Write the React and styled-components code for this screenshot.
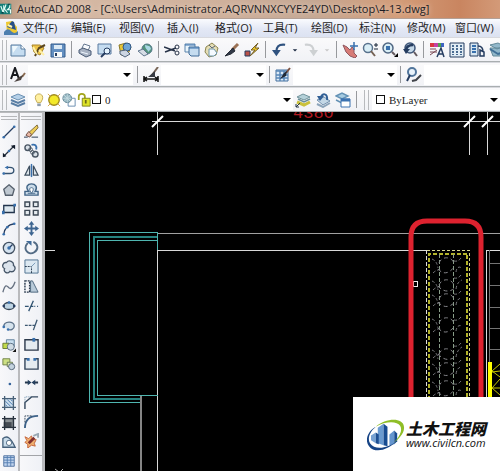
import React from 'react';
import styled, { createGlobalStyle } from 'styled-components';

const GlobalStyle = createGlobalStyle`
	* {
		box-sizing: border-box;
	}
	body {
		margin: 0;
		background: #000;
		font-family: "Open Sans", "Noto Sans CJK SC", sans-serif;
		font-size: 12px;
		color: #1c1c24;
	}
	button, select {
		font: inherit;
		color: inherit;
	}
`;

const Window = styled.div`
	display: flex;
	flex-direction: column;
	height: 100vh;
	overflow: hidden;
`;
const TitleBar = styled.header`
	display: flex;
	align-items: center;
	gap: 5px;
	height: 19px;
	flex: none;
	background: linear-gradient(90deg, #b99a82, #d5b9a4 12%, #cfb09b 45%, #c5a894 62%, #d39c78 80%, #c98560 92%, #d39a78);
	border-bottom: 1px solid #b3a096;
	overflow: hidden;
`;
const Title = styled.h1`
	margin: 0;
	font-size: 11px;
	line-height: 18px;
	font-weight: 400;
	white-space: nowrap;
	text-shadow: 0 0 5px #f0ddd0;
`;
const MenuBar = styled.nav`
	display: flex;
	align-items: center;
	height: 18px;
	flex: none;
	padding-left: 3px;
	background: linear-gradient(#fafbfe, #e3e8f5 55%, #dce2f1);
	overflow: hidden;
`;
const MenuItem = styled.button`
	flex: none;
	width: 48px;
	padding: 0 0 0 4px;
	border: 0;
	background: none;
	font-size: 11px;
	line-height: 18px;
	text-align: left;
	white-space: nowrap;
`;
const Toolbar = styled.div`
	display: flex;
	align-items: center;
	height: 25px;
	flex: none;
	background: linear-gradient(#fafafb, #f1f2f6);
	border-top: 1px solid #d8d9de;
	border-bottom: 1px solid #a9aeb0;
	overflow: hidden;
`;
const Grip = styled.span`
	flex: none;
	width: 5px;
	height: 20px;
	margin-left: ${(p) => (p.$inner ? 4 : 2)}px;
	margin-right: ${(p) => (p.$inner ? 3 : 1)}px;
	border: solid #b8babd;
	border-width: 0 1px;
`;
const Separator = styled.span`
	flex: none;
	width: 1px;
	height: 17px;
	margin: 0 3px;
	background: #97999d;
`;
const ToolButton = styled.button`
	display: flex;
	align-items: center;
	justify-content: center;
	flex: none;
	width: ${(p) => p.$width || 20}px;
	height: 20px;
	padding: 0;
	border: 0;
	background: none;
	overflow: hidden;
`;
const Combo = styled.label`
	display: flex;
	align-items: center;
	gap: 1px;
	position: relative;
	flex: ${(p) => (p.$width ? 'none' : '1 0 auto')};
	width: ${(p) => (p.$width ? p.$width + 'px' : 'auto')};
	min-width: ${(p) => p.$min || 0}px;
	height: 20px;
	margin-right: ${(p) => p.$gap || 0}px;
	padding-left: 4px;
	background: #fff;
`;
const Select = styled.select`
	flex: 1;
	min-width: 0;
	height: 20px;
	padding: 0 12px 0 3px;
	border: 0;
	background: none;
	appearance: none;
	font-family: "Liberation Serif", serif;
	font-size: 11px;
`;
const Caret = styled.span`
	position: absolute;
	right: 2px;
	top: 8px;
	border: 4px solid transparent;
	border-top: 4px solid #000;
	border-bottom: 0;
	pointer-events: none;
`;
const Swatch = styled.span`
	flex: none;
	width: 9px;
	height: 9px;
	border: 1px solid #111;
	background: #fff;
`;
const Body = styled.main`
	display: flex;
	flex: 1;
	min-height: 0;
`;
const Palette = styled.aside`
	display: flex;
	flex-direction: column;
	flex: none;
	width: ${(p) => p.$width}px;
	padding-top: 3px;
	background: linear-gradient(90deg, #f8f8fa, #eff1f6);
	border-right: ${(p) => p.$edge}px solid #b9babd;
	border-top: 1px solid #b9babd;
`;
const PaletteGrip = styled.span`
	flex: none;
	height: 4px;
	margin: 0 1px 2px;
	border: solid #b5b7ba;
	border-width: 1px 0;
`;
const PaletteButton = styled.button`
	display: flex;
	align-items: center;
	justify-content: center;
	flex: 1;
	min-height: 0;
	padding: 0;
	border: 0;
	background: none;
`;
const PaletteEnd = styled.div`
	flex: 1;
	margin-top: 4px;
	margin-bottom: -4px;
	border-top: 1px solid #a2a4a8;
`;
const Canvas = styled.section`
	position: relative;
	flex: 1;
	min-width: 0;
	background: #000;
	overflow: hidden;
`;
const Drawing = styled.svg`
	display: block;
	width: 100%;
	height: 100%;
`;
const Brand = styled.a`
	position: absolute;
	right: 0;
	bottom: 0;
	display: flex;
	align-items: center;
	height: 74px;
	padding: 0 14px;
	background: #fff;
	color: #111;
	text-decoration: none;
`;
const BrandText = styled.span`
	display: flex;
	flex-direction: column;
`;
const BrandName = styled.strong`
	font-family: "Noto Sans CJK SC", sans-serif;
	font-size: 16px;
	font-weight: 900;
	font-style: italic;
	line-height: 18px;
`;
const BrandUrl = styled.span`
	font-family: "Open Sans", sans-serif;
	font-size: 11px;
	font-weight: 500;
	font-style: italic;
	line-height: 12px;
`;

const NAVY = '#253c60';
const BLUE = '#3970ad';
const SKY = '#c5dcf0';

// every glyph is drawn on a 16 x 16 grid
const glyphs = {
	app: <><path d="M0 1h15v14H0z" fill="#157e78" /><path d="M1 4l3 8M5 3v10M8 2l-2 6 4 5M13 2v4l-3 3h4v5" stroke="#e6fff8" strokeWidth="1.5" /><path d="M2 13h3M11 2h2" stroke="#073f43" strokeWidth="2" /></>,
	dwg: <><path d="M3 2l6-1 5 6v6H4z" fill="#edc832" /><path d="M4 7l5-6 2 1 2 8-3-1z" fill="#274f88" /><path d="M1 12c3-4 5-3 7-1s4 3 7 0v4H1z" fill="#4c7eaf" /><path d="M5 5l4 2" stroke="#fff4b0" strokeWidth="2" /></>,
	file: <><path d="M1 3h10l4 4v7H1z" fill={SKY} stroke="#577b9e" /><path d="M11 3v4h4" fill="#fff" stroke="#577b9e" /><path d="M2 4h6L3 11z" fill="#eff8fc" /></>,
	open: <><path d="M2 3h8l4 3-4 7-6-3z" fill="#edc347" stroke="#a8842c" /><path d="M5 14l4-8 6-3" stroke="#59451f" strokeWidth="2" /><path d="M9 8l5 5M3 5l4 7" stroke="#fff0a5" strokeWidth="2" /></>,
	save: <><path d="M1 2h14v13H1z" fill="#638fc1" stroke="#345c8d" /><path d="M4 3h8v4H4z" fill="#dceaf5" /><path d="M4 10h8v5H4z" fill="#f5f8fa" /><path d="M6 11v3" stroke={NAVY} strokeWidth="2" /></>,
	print: <><path d="M5 6l2-4 6 2-2 5z" fill="#fff" stroke="#63758e" /><path d="M2 8l4-2 8 3v4l-5 2-7-4z" fill="#a7b1c1" stroke="#495b76" /><path d="M4 10l7 2M7 4l4 1" stroke="#eef6ff" /></>,
	preview: <><path d="M1 2h13v10H1z" fill={SKY} stroke="#5b7ba0" /><circle cx="10" cy="9" r="3" fill="#e5f4ff" stroke={NAVY} /><path d="M8 11l-4 4" stroke={NAVY} strokeWidth="2" /></>,
	publish: <><path d="M2 3l7-2 5 4-3 7-7 1z" fill="#e8c638" stroke="#8a792b" /><circle cx="10" cy="5" r="4" fill="#6ea5d6" stroke="#315782" /><path d="M3 9l6-1 4 4-5 3-5-3z" fill="#ccd5e2" stroke="#50627b" /></>,
	globe: <><circle cx="10" cy="7" r="5" fill="#52937b" stroke="#55798a" /><path d="M8 3c3 1 5 0 6 4l-3 3c0-3-3-2-3-7" fill="#a9d7e4" /><path d="M1 9l5-2 5 5-4 2z" fill="#d5dce5" stroke="#60768e" /></>,
	cut: <><path d="M0 5l11 4M1 10l11-4" stroke="#273348" strokeWidth="1.5" /><circle cx="13" cy="5" r="2" stroke="#273348" /><circle cx="13" cy="11" r="2" stroke="#273348" /></>,
	copy: <><path d="M1 2h10v8H1z" fill="#eaf5fb" stroke="#5b84ac" /><path d="M5 5h10v9H7l-2-2z" fill={SKY} stroke="#3e6b98" /><path d="M1 3h10M5 6h10" stroke={BLUE} /></>,
	paste: <><path d="M2 5l6-4 6 5-2 7-7 2-4-5z" fill="#e4ddb5" stroke="#8d8650" /><path d="M5 7h5l3 4-3 3H5z" fill="#f5faff" stroke="#6e96aa" /><path d="M5 3l3 3 3-2" stroke="#586477" /></>,
	brush: <><path d="M14 2L8 8" stroke="#9b7255" strokeWidth="3" /><path d="M9 6l2 3-4 3-6 2 4-4z" fill="#303848" stroke="#272d37" /></>,
	block: <><path d="M1 9h5v5H1z" fill="#b95149" stroke={NAVY} /><path d="M14 1l-7 7h4l-5 6 9-8h-4z" fill="#f4ce26" stroke="#745f29" /></>,
	undo: <><path d="M15 2C7 1 5 5 5 10" stroke="#2f527f" strokeWidth="2.5" /><path d="M0 8h10l-5 7z" fill="#2f527f" /></>,
	redo: <><path d="M1 2c8-1 10 3 10 8" stroke="#cdd0d2" strokeWidth="2.5" /><path d="M6 8h10l-5 7z" fill="#cdd0d2" /></>,
	down: <path d="M5 7h6l-3 3z" fill="#1b2940" />,
	downPale: <path d="M5 7h6l-3 3z" fill="#c8c8c8" />,
	pan: <><path d="M1 3l4 2 3 3 2-3 2 2v4l3 3-2 2-5-2-4-4z" fill="#d77b76" stroke="#8e5860" /><path d="M12 0v8M8 4h8" stroke={BLUE} strokeWidth="1.5" /></>,
	zoom: <><circle cx="6" cy="6" r="4.500" fill="#d9eef6" stroke="#58718c" strokeWidth="1.5" /><path d="M9 9l4 5" stroke="#756255" strokeWidth="2" /><path d="M14 1v4M12 3h4M12 7h4" stroke="#172536" /></>,
	zoomWin: <><circle cx="6" cy="6" r="5" fill="#d9eef6" stroke="#506783" strokeWidth="1.5" /><path d="M4 4h4v4H4z" fill={BLUE} /><path d="M10 10l3 3" stroke="#655b61" strokeWidth="2" /><path d="M12 15h4v-4z" fill="#000" /></>,
	zoomBack: <><circle cx="8" cy="6" r="5" fill="#c4d8e8" stroke="#405779" strokeWidth="1.5" /><path d="M12 10l3 4" stroke="#655b61" strokeWidth="2" /><path d="M4 9C4 5 7 3 11 3" stroke={NAVY} strokeWidth="2.5" /><path d="M1 7h7l-4 5z" fill={NAVY} /></>,
	props: <><path d="M1 1h4v4H1z" fill="#d83940" /><path d="M5 1h4v4H5z" fill="#c541a6" /><path d="M9 1h3v4H9z" fill="#50a34e" /><path d="M12 1h3v4h-3z" fill="#3e64c3" /><path d="M1 7h6M1 10h7M1 13l7-5" stroke="#784653" /><path d="M8 15l4-9 3 9M9 12h5" stroke={NAVY} strokeWidth="1.5" /></>,
	center: <><path d="M1 1h14v14H1z" fill="#e2edf5" stroke={NAVY} /><path d="M4 3v10M8 3v10M12 3v10" stroke="#496b91" strokeWidth="2" strokeDasharray="2 1" /></>,
	tools: <><path d="M1 1h8v13H1z" fill="#d8e7f2" stroke={NAVY} /><path d="M3 4h4M3 7h4M3 10h4" stroke={BLUE} strokeWidth="2" /><path d="M9 4c4 0 5 2 5 6M11 8v6h4v-4z" stroke={NAVY} strokeWidth="1.5" /></>,
	sheet: <><path d="M1 3l8-2 6 3-7 3zM1 6h12l2 8H4z" fill="#91b7ca" stroke="#638999" /><path d="M1 7l8 5 6-2" stroke="#406f96" strokeWidth="2" /></>,
	text: <><path d="M1 12L5 1l4 11M2 8h6" stroke="#17191e" strokeWidth="2" /><path d="M15 6l-3 4" stroke="#8a6a50" strokeWidth="2" /><path d="M13 8l-2 5-7 2 5-5z" fill="#4b4340" /></>,
	dim: <><path d="M1 9v6M15 9v6M1 12h14M4 10l-3 2 3 2M12 10l3 2-3 2" stroke="#111" strokeWidth="1.5" /><path d="M15 0L9 8" stroke="#796658" strokeWidth="2" /><path d="M12 4v6H5z" fill="#363a42" /></>,
	table: <><path d="M1 3h12v11H1z" fill="#dceaf7" stroke="#436e9e" /><path d="M1 4h12M1 8h12M1 11h12M5 4v10M9 4v10" stroke="#5886b8" strokeWidth="1.5" /><path d="M15 1l-4 5" stroke="#7d513f" strokeWidth="2" /><path d="M12 4l-1 5-6 3 4-6z" fill="#202936" /></>,
	leader: <><circle cx="6" cy="5" r="4" fill="#e9f3fb" stroke="#52769c" strokeWidth="2" /><path d="M4 8l-3 6" stroke={NAVY} strokeWidth="2" /><path d="M15 8l-5 5-4 1" stroke="#41454b" strokeWidth="2" /></>,
	layers: <><path d="M1 5l7-3 7 3-7 3z" fill="#b5d0e8" stroke="#6b91b3" /><path d="M1 8l7 3 7-3M1 11l7 3 7-3" stroke="#587da4" strokeWidth="2" /></>,
	bulb: <><path d="M6 11L4 7c-2-8 10-8 8 0l-2 4z" fill="#fff0a0" stroke="#bea349" /><path d="M6 12h4v3H6z" fill="#8e9dac" /></>,
	sun: <><circle cx="8" cy="8" r="6" fill="#f3e929" stroke="#9f891d" strokeWidth="1.5" /><path d="M1 1l3 3M12 4l3-3M1 15l3-3M12 12l3 3" stroke="#d3a437" /></>,
	freeze: <><path d="M8 6h7v9H7v-4" fill="#fff" stroke="#5e84aa" /><circle cx="6" cy="6" r="5" fill="#93b4bf" stroke="#587d8d" /><path d="M6 1v10M1 6h10M2 2l8 8M2 10l8-8" stroke="#c3dae0" /></>,
	lock: <><path d="M2 8V4c0-4 7-4 7 0v3" stroke="#a3a51c" strokeWidth="2" /><path d="M6 6h9v9H6z" fill="#dee327" stroke="#777b1a" /><path d="M10 8v4" stroke="#6d6b19" strokeWidth="2" /></>,
	layerSet: <><path d="M2 5l6-3 7 3-6 3z" fill="#b4d0d8" stroke="#72949c" /><path d="M2 10l7 3 6-3" stroke="#c9c03c" strokeWidth="3" /><path d="M3 7l6 3 6-3" stroke="#6c8f99" strokeWidth="1.5" /><path d="M1 15l4-4M1 12v3h3" stroke="#223344" /></>,
	layerBack: <><path d="M2 8l7-3 6 4-7 4z" fill="#c3d7e6" stroke="#7290ae" /><path d="M2 12l6 3 7-4" stroke="#8ca4ba" strokeWidth="2" /><path d="M12 8C13 1 7 1 6 5" stroke="#315f95" strokeWidth="2" /><path d="M2 4h7l-4 5z" fill="#315f95" /></>,
	layerState: <><path d="M1 4l6-3 6 3-6 3zM1 8l6 3" fill="#a6cbe1" stroke="#6492b5" strokeWidth="1.5" /><path d="M6 7h9v8H6z" fill="#fff" stroke="#3b72b1" /><path d="M6 8h9" stroke="#3b72b1" strokeWidth="3" /></>,
	line: <><path d="M2 14L14 2" stroke={NAVY} strokeWidth="1.5" /><circle cx="2" cy="14" r="1.5" fill={BLUE} /><circle cx="14" cy="2" r="1.5" fill={BLUE} /></>,
	ray: <><path d="M2 14L14 2" stroke="#26303e" strokeWidth="1.5" /><path d="M1 15v-5l4 4zM15 1v5l-5-4z" fill="#111b2a" /><circle cx="8" cy="8" r="1.5" fill={BLUE} /></>,
	pline: <><path d="M1 12h8c6 0 6-7 0-7H5" stroke="#345270" strokeWidth="1.5" /><path d="M3 5l4-2v4z" fill={BLUE} /><circle cx="2" cy="12" r="1.5" fill={BLUE} /></>,
	polygon: <path d="M8 2l6 5-2 7H4L2 7z" fill="#bfc8d1" stroke="#56606d" strokeWidth="1.5" />,
	rect: <><path d="M2 4h12v8H2z" fill="#dce7ef" stroke="#22344c" strokeWidth="1.5" /><path d="M0 10h3v4H0zM13 2h3v3h-3z" fill={BLUE} /></>,
	arc: <><path d="M2 14C3 7 7 3 14 2" stroke={NAVY} strokeWidth="1.5" /><circle cx="2" cy="14" r="1.5" fill={BLUE} /><circle cx="6" cy="6" r="1.5" fill={BLUE} /><circle cx="14" cy="2" r="1.5" fill={BLUE} /></>,
	circle: <><circle cx="8" cy="8" r="6.5" fill="#d4e2ef" stroke="#435264" strokeWidth="1.5" /><path d="M8 8l4-4" stroke={NAVY} strokeWidth="1.5" /><circle cx="8" cy="8" r="2" fill={BLUE} /></>,
	cloud: <path d="M5 3c3-4 9-1 8 3 4 3 1 9-4 7-3 4-8 0-6-3-4-2-2-8 2-7z" fill="#dce4ed" stroke="#465668" strokeWidth="1.5" />,
	spline: <path d="M1 14C4 3 6 7 8 9s5-1 7-7" stroke="#667181" strokeWidth="1.5" />,
	ellipse: <><ellipse cx="8" cy="8" rx="6" ry="4" fill="#bed4e4" stroke="#344353" strokeWidth="1.5" /><circle cx="2" cy="8" r="1.5" fill={NAVY} /><circle cx="14" cy="8" r="1.5" fill={NAVY} /><circle cx="8" cy="4" r="1.5" fill={BLUE} /></>,
	ellipseArc: <><path d="M2 9c0-7 12-7 12-1 0 4-4 5-7 4" fill="#d6e3ed" stroke="#5d7289" strokeWidth="1.5" /><circle cx="2" cy="9" r="1.5" fill={BLUE} /><circle cx="7" cy="12" r="1.5" fill={BLUE} /></>,
	insert: <><path d="M5 2h9v8H5z" fill="#c9dff0" stroke="#557793" /><path d="M1 6h7v6H1z" fill="#c1da4a" stroke="#60732b" /><circle cx="10" cy="10" r="4" fill="#cfdbe4" stroke="#52667a" /><path d="M12 16h4v-4z" fill="#111" /></>,
	makeBlock: <><path d="M1 2h8v7H1z" fill="#cde084" stroke="#687a3f" /><path d="M6 6h6v5H6z" fill="#dbe9ac" stroke="#657850" /><circle cx="11" cy="11" r="3.5" fill="#c4d3df" stroke="#4b5d70" /></>,
	point: <circle cx="9" cy="8" r="1.5" fill="#35639b" />,
	hatch: <><path d="M2 2h12v12H2z" fill="#d1e1ee" /><path d="M0 3h16M0 13h16M3 0v16M13 0v16" stroke="#496178" strokeWidth="1.5" /><path d="M4 6l6 6M6 4l6 6M4 10l2 2M10 4l2 2" stroke={BLUE} /></>,
	gradient: <><path d="M2 2h12v12H2z" fill="#8b9194" /><path d="M2 7h9v6H2z" fill="#454b52" /><path d="M0 3h16M0 13h16M3 0v16M13 0v16" stroke="#29323d" strokeWidth="1.5" /></>,
	region: <><path d="M1 14V4c5-4 9-1 14 10z" fill="#c9dcea" stroke="#46617b" strokeWidth="1.5" /><circle cx="8" cy="9" r="3" fill="#fff" stroke="#46617b" /></>,
	grid: <><path d="M2 2h12v12H2z" fill="#c0d4ee" stroke="#4a6d9b" /><path d="M2 4h12M2 7h12M2 10h12M6 2v12M10 2v12" stroke="#527db0" /></>,
	erase: <><path d="M14 1l1 3-8 9-4-2z" fill="#eccb57" stroke="#7d6a39" /><path d="M5 8l3 3-2 3-4-2z" fill="#e9b8a5" stroke="#71514b" /><path d="M0 14h4M8 14h7" stroke="#22344c" /></>,
	copyObj: <><circle cx="4" cy="5" r="3" fill="#dae1e8" stroke="#4a5664" strokeWidth="1.5" /><circle cx="7" cy="7" r="2" stroke="#4a5664" /><circle cx="12" cy="12" r="3" fill="#dae1e8" stroke="#4a5664" strokeWidth="1.5" /><circle cx="9" cy="10" r="2" stroke="#4a5664" /><path d="M8 2c4-1 6 1 5 5" stroke={BLUE} strokeWidth="2" /></>,
	mirror: <><path d="M6 3v10H1z" fill="#dce4ea" stroke="#3d4d5e" strokeWidth="1.3" /><path d="M10 3v10h5z" fill="#dce4ea" stroke="#3d4d5e" strokeWidth="1.3" /><path d="M8 1v14" stroke={BLUE} strokeWidth="1.5" /></>,
	offset: <><path d="M1 14v-4h4C1 5 4 2 8 2s7 3 4 8h3v4z" fill="#cbdbe9" stroke="#416486" strokeWidth="1.5" /><path d="M4 12h8M8 12c-3-4-2-6 0-6s3 2 0 6" fill="#fff" stroke="#416486" /></>,
	array: <path d="M1 1h5v5H1zM10 1h5v5h-5zM1 10h5v5H1zM10 10h5v5h-5z" fill="#e5ebef" stroke="#3e4956" strokeWidth="1.5" />,
	move: <><path d="M8 3v10M3 8h10" stroke="#3d6591" strokeWidth="2" /><path d="M5 4l3-4 3 4zM5 12l3 4 3-4zM4 5L0 8l4 3zM12 5l4 3-4 3z" fill="#3d6591" /></>,
	rotate: <><path d="M4 3c-6 7 1 14 7 10 5-3 4-9-1-11" stroke="#546c85" strokeWidth="2" /><path d="M2 1h6v5z" fill="#416b98" /></>,
	scale: <><path d="M1 1h14v14H1z" fill="#dce8f1" stroke="#4e718f" /><path d="M1 8h7v7" stroke="#273a4e" strokeDasharray="2 1" /><path d="M8 8l4-4" stroke="#7597b5" /></>,
	stretch: <><path d="M1 2h5v12H1z" stroke="#29394c" strokeDasharray="2 1" strokeWidth="1.5" /><path d="M7 2h2l6 12H7z" fill="#b9cbda" stroke="#4c657d" /></>,
	trim: <path d="M1 9h4M7 9h3M11 9h1M14 9h1M5 14l5-11" stroke="#315371" strokeWidth="1.4" />,
	extend: <path d="M1 9h3M5 9h3M9 9h3M10 14l4-11" stroke="#3d5871" strokeWidth="1.4" />,
	breakPt: <><path d="M1 3h14v11H1z" fill="#e5ebf0" stroke="#2c394b" strokeWidth="1.5" /><path d="M9 1h3v4H9z" fill={BLUE} /></>,
	breakObj: <><path d="M5 3H1v11h14V3h-4" fill="#e5ebf0" stroke="#34465b" strokeWidth="1.5" /><path d="M3 2h3v3H3zM10 2h3v3h-3z" fill={BLUE} /></>,
	join: <><path d="M1 8h5M10 8h5" stroke="#26384e" strokeWidth="2" /><path d="M4 5l4 3-4 3zM12 5L8 8l4 3z" fill="#26415f" /></>,
	chamfer: <><path d="M1 15V8l7-6h7" stroke="#33475d" strokeWidth="1.5" /><path d="M1 7V2h6" stroke="#6689a6" strokeDasharray="1 1" /></>,
	fillet: <><path d="M1 15C1 7 5 2 15 2" stroke="#3e6288" strokeWidth="2" /><path d="M1 9V2h7" stroke="#34465b" strokeDasharray="2 1" /></>,
	explode: <><path d="M1 4l4 2 3-3 1 4 4 0-2 4 1 3-4-1-4 3 0-4-3-2 2-2z" fill="#f0b070" stroke="#c4643c" /><path d="M5 11l6-6" stroke="#822f2d" strokeWidth="3" /><path d="M10 3l5-2v4" stroke="#9aa9b4" strokeWidth="2" /></>,
};

const Glyph = ({ name, size = 16 }) => (
	<svg width={size} height={size} viewBox="0 0 16 16" fill="none" aria-hidden="true">
		{glyphs[name]}
	</svg>
);

const menus = ['文件(F)', '编辑(E)', '视图(V)', '插入(I)', '格式(O)', '工具(T)', '绘图(D)', '标注(N)', '修改(M)', '窗口(W)'];

const standardTools = [
	['file', 'open', 'save'],
	['print', 'preview', 'publish', 'globe'],
	['cut', 'copy', 'paste', 'brush', 'block'],
	['undo', 'down', 'redo', 'downPale'],
	['pan', 'zoom', 'zoomWin', 'zoomBack'],
	['props', 'center', 'tools', 'sheet'],
];

const drawTools = ['line', 'ray', 'pline', 'polygon', 'rect', 'arc', 'circle', 'cloud', 'spline', 'ellipse', 'ellipseArc', 'insert', 'makeBlock', 'point', 'hatch', 'gradient', 'region', 'grid'];
const modifyTools = ['erase', 'copyObj', 'mirror', 'offset', 'array', 'move', 'rotate', 'scale', 'stretch', 'trim', 'extend', 'breakPt', 'breakObj', 'join', 'chamfer', 'fillet', 'explode'];

const Tool = ({ name }) => (
	<ToolButton aria-label={name} $width={name.startsWith('down') ? 12 : 20}>
		<Glyph name={name} size={name === 'undo' || name === 'redo' ? 14 : 16} />
	</ToolButton>
);

const StyleCombo = ({ label, width, gap, min }) => (
	<Combo $width={width} $gap={gap} $min={min}>
		<Select aria-label={label} />
		<Caret />
	</Combo>
);

// clothes hanging in the wardrobe: centre line and tilt of each piece
const hangers = [
	[266, -3],
	[283, 2],
	[299, 0],
	[325, -2],
	[351, 3],
	[368, 0],
	[389, -3],
];

const Plan = () => (
	<Drawing viewBox="45 112 455 359" preserveAspectRatio="xMinYMin slice" fill="none" role="img" aria-label="4-13.dwg">
		<text x="293" y="118" fill="#b31922" fontFamily="Liberation Mono, monospace" fontSize="17">4380</text>
		<g stroke="#d8d8d8" shapeRendering="crispEdges">
			<path d="M152 121.5H500M157.5 112V155M469.5 112V155M487.5 112V155" />
			<path d="M45 250.5H55M158 250.5H427M157.5 250V471" />
			<path d="M158 233.5H500" stroke="#a0a0a0" />
			<path d="M140.5 395V471" stroke="#858585" strokeWidth="2" />
		</g>
		<path d="M152 127L163 116M464 127L475 116M482 127L493 116" stroke="#fff" strokeWidth="2" />
		<g shapeRendering="crispEdges">
			<path d="M158 232.500H89.500V402.500H140" stroke="#4fb5b0" />
			<path d="M158 236.500H94V398.500H140" stroke="#25827f" strokeWidth="2" />
			<path d="M158 240.500H97.500V395.500H158M157.500 233V250" stroke="#4fb5b0" />
		</g>
		<g shapeRendering="crispEdges">
			<path d="M486.500 471V250.500H500" stroke="#ddd" />
			<path d="M489.500 471V250M490 263.500H500M490 285.500H500M490 307.500H500M490 328.500H500M490 349.500H500" stroke="#747474" />
			<path d="M426.500 250V400" stroke="#ddd" strokeDasharray="4 2" />
			<path d="M427 250.500H469.500V400" stroke="#d8d891" strokeDasharray="3 2" />
			<path d="M429 400V253.500H467V400" stroke="#b5b52b" strokeDasharray="4 2" strokeWidth="2" />
			<path d="M439.500 254V400M453.500 254V400" stroke="#889d88" strokeDasharray="4 2" />
		</g>
		<g stroke="#85858a">
			{hangers.map(([y, tilt]) => (
				<g key={y}>
					<path d={`M439 ${y + tilt}a8 8 0 0 1 15 0M438 ${y + 3}q8 9 17 ${tilt}`} strokeDasharray="4 3" />
					<path d={`M432 ${y - 4 + tilt}q5 2 6 9M456 ${y + 6}q1-7 6-${7 + tilt}M433 ${y + 7}q4-4 8-3M454 ${y - 5}q4 1 7-3`} stroke="#77777c" strokeDasharray="3 2" />
				</g>
			))}
		</g>
		<path d="M490 362V400" stroke="#ffff00" strokeWidth="4" />
		<path d="M492 371l8-7M492 371l8 6M492 388l8-9M492 388l8 7M492 372l8-1M492 388h8" stroke="#c6c600" />
		<rect x="413.500" y="281.500" width="4" height="5" stroke="#eee" />
		<path d="M411 480V237Q411 221 427 221H465Q481 221 481 237V480" stroke="#dd222f" strokeWidth="5" />
		<path d="M55 469l4 3M63 469l-3 3" stroke="#aaa" />
	</Drawing>
);

const App = () => (
	<>
		<GlobalStyle />
		<Window>
			<TitleBar>
				<Glyph name="app" size={12} />
				<Title>AutoCAD 2008 - [C:\Users\Administrator.AQRVNNXCYYE24YD\Desktop\4-13.dwg]</Title>
			</TitleBar>
			<MenuBar>
				<Glyph name="dwg" />
				{menus.map((menu) => (
					<MenuItem key={menu}>{menu}</MenuItem>
				))}
			</MenuBar>
			<Toolbar>
				<Grip />
				{standardTools.map((group, i) => (
					<React.Fragment key={group[0]}>
						{i > 0 && <Separator />}
						{group.map((name) => (
							<Tool key={name} name={name} />
						))}
					</React.Fragment>
				))}
			</Toolbar>
			<Toolbar>
				<Grip />
				<Tool name="text" />
				<StyleCombo label="文字样式" width={105} gap={1} />
				<Separator />
				<Tool name="dim" />
				<StyleCombo label="标注样式" width={105} />
				<Separator />
				<Tool name="table" />
				<StyleCombo label="表格样式" width={104} />
				<Separator />
				<Tool name="leader" />
				<StyleCombo label="多重引线样式" min={110} />
			</Toolbar>
			<Toolbar>
				<Grip />
				<Tool name="layers" />
				<Combo $width={265}>
					<Glyph name="bulb" size={14} />
					<Glyph name="sun" size={14} />
					<Glyph name="freeze" size={14} />
					<Glyph name="lock" size={14} />
					<Swatch />
					<Select aria-label="图层">
						<option>0</option>
					</Select>
					<Caret />
				</Combo>
				<Tool name="layerSet" />
				<Tool name="layerBack" />
				<Tool name="layerState" />
				<Separator />
				<Grip $inner />
				<Combo>
					<Swatch />
					<Select aria-label="颜色">
						<option>ByLayer</option>
					</Select>
					<Caret />
				</Combo>
			</Toolbar>
			<Body>
				<Palette $width={20} $edge={2}>
					<PaletteGrip />
					{drawTools.map((name) => (
						<PaletteButton key={name} aria-label={name}>
							<Glyph name={name} size={14} />
						</PaletteButton>
					))}
				</Palette>
				<Palette $width={25} $edge={3}>
					<PaletteGrip />
					{modifyTools.map((name) => (
						<PaletteButton key={name} aria-label={name}>
							<Glyph name={name} size={15} />
						</PaletteButton>
					))}
					<PaletteEnd />
				</Palette>
				<Canvas>
					<Plan />
					<Brand href="#civilcn">
						<svg width="39" height="33" viewBox="0 0 40 34" fill="none" aria-hidden="true">
							<path d="M11 10l6-4v22l-6-2z" fill="#6a9ad0" />
							<path d="M17 6l4 3v20l-4-1z" fill="#184c91" />
							<path d="M4 18l5-3v11l-5-3z" fill="#76a1d2" />
							<path d="M9 15l3 2v10l-3-1z" fill="#1e4f92" />
							<path d="M23 17l5-4v14l-5 1z" fill="#6495ce" />
							<path d="M28 13l3 3v8l-3 3z" fill="#194b91" />
							<path d="M9 9C19 0 37-1 38 9c1 7-6 13-11 17 6-6 10-13 7-18C31 3 19 3 9 9z" fill="#8fbe27" />
							<path d="M9 9C3 14 0 21 3 26c5 8 19 5 27-2-8 9-22 13-28 5C-3 23 1 13 9 9z" fill="#174486" />
						</svg>
						<BrandText>
							<BrandName>土木工程网</BrandName>
							<BrandUrl>www.civilcn.com</BrandUrl>
						</BrandText>
					</Brand>
				</Canvas>
			</Body>
		</Window>
	</>
);

export default App;
